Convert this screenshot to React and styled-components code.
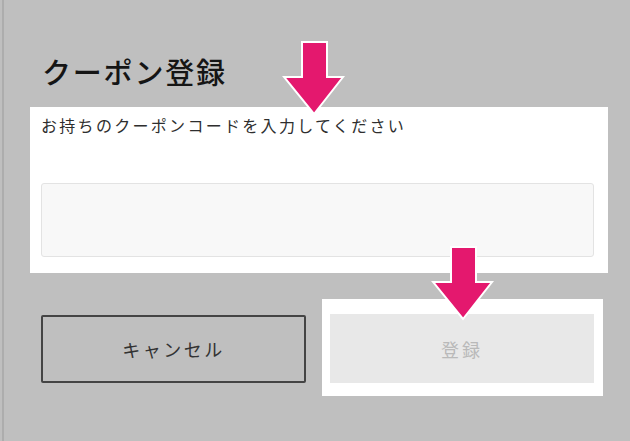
import styled, { createGlobalStyle } from "styled-components";

const GlobalStyle = createGlobalStyle`
  html, body {
    margin: 0;
    padding: 0;
    background: #bfbfbf;
  }
  * {
    box-sizing: border-box;
  }
`;

const Arrow = ({ left, top }) => (
  <ArrowWrap style={{ left, top }}>
    <svg width="64" height="78" viewBox="0 0 64 78">
      <polygon
        points="20,2 45,2 45,37 61,37 32,74 2,37 20,37"
        fill="#e4186e"
        stroke="#ffffff"
        strokeWidth="2"
        strokeLinejoin="miter"
      />
    </svg>
  </ArrowWrap>
);

const App = () => {
  return (
    <>
      <GlobalStyle />
      <Page>
        <Frame>
          <Title>クーポン登録</Title>
          <Highlight>
            <Label>お持ちのクーポンコードを入力してください</Label>
            <CodeInput type="text" />
          </Highlight>
          <ButtonRow>
            <CancelButton>キャンセル</CancelButton>
            <ButtonSpot>
              <SubmitButton disabled>登録</SubmitButton>
            </ButtonSpot>
          </ButtonRow>
        </Frame>
        <Arrow left={282} top={40} />
        <Arrow left={431} top={245} />
      </Page>
    </>
  );
};

export default App;

const Page = styled.div`
  position: relative;
  width: 630px;
  height: 441px;
  overflow: hidden;
  background: #bfbfbf;
  font-family: "Noto Sans CJK JP", "Noto Sans", sans-serif;
`;

const Frame = styled.div`
  margin-left: 2px;
  height: 100%;
  border-left: 2px solid #adadad;
  padding-left: 26px;
  padding-top: 54px;
`;

const Title = styled.h1`
  margin: 0 0 19px 12px;
  font-size: 29px;
  line-height: 34px;
  font-weight: 500;
  letter-spacing: 1.8px;
  color: #151515;
`;

const Highlight = styled.div`
  width: 578px;
  height: 166px;
  background: #ffffff;
  padding: 7px 14px 16px 11px;
  display: flex;
  flex-direction: column;
`;

const Label = styled.div`
  font-size: 16px;
  line-height: 22px;
  letter-spacing: 2.3px;
  color: #2e2e2e;
  margin-bottom: 47px;
`;

const CodeInput = styled.input`
  width: 553px;
  height: 74px;
  border: 1px solid #e3e3e3;
  border-radius: 3px;
  background: #f8f8f8;
  outline: none;
`;

const ButtonRow = styled.div`
  display: flex;
  align-items: flex-start;
  gap: 16px;
  margin-top: 26px;
  margin-left: 11px;
`;

const CancelButton = styled.button`
  margin-top: 16px;
  width: 265px;
  height: 68px;
  border: 2px solid #444444;
  border-radius: 2px;
  background: transparent;
  font-family: inherit;
  font-size: 18px;
  letter-spacing: 2.5px;
  color: #333333;
`;

const ButtonSpot = styled.div`
  width: 281px;
  height: 97px;
  background: #ffffff;
  padding: 15px 9px 13px 8px;
`;

const SubmitButton = styled.button`
  width: 264px;
  height: 69px;
  border: none;
  background: #e8e8e8;
  font-family: inherit;
  font-size: 18px;
  letter-spacing: 3px;
  color: #b9b9b9;
`;

const ArrowWrap = styled.div`
  position: absolute;
  line-height: 0;
`;
